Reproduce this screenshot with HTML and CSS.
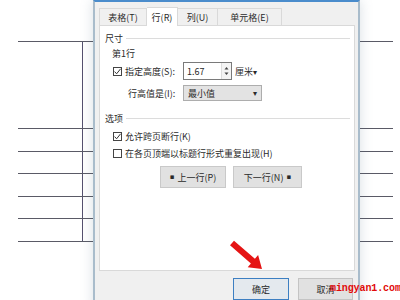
FILE: index.html
```html
<!DOCTYPE html>
<html>
<head>
    <meta charset="utf-8">
    <title>表格属性</title>
    <link rel="stylesheet" href="styles.css">
</head>
<body>
    <div class="doc">
        <div class="doc_table">
            <div class="doc_row r1"><div class="doc_cell"></div></div>
            <div class="doc_row r2"><div class="doc_cell"></div></div>
            <div class="doc_row r3"><div class="doc_cell"></div></div>
            <div class="doc_row r2"><div class="doc_cell"></div></div>
            <div class="doc_row r3"><div class="doc_cell"></div></div>
            <div class="doc_row r2"><div class="doc_cell"></div></div>
        </div>
    </div>

    <div class="dialog">
        <div class="tabs">
            <div class="tab t1">表格(T)</div>
            <div class="tab t2 active">行(R)</div>
            <div class="tab t3">列(U)</div>
            <div class="tab t4">单元格(E)</div>
        </div>

        <div class="panel">
            <div class="legend"><span>尺寸</span><i class="legend_line"></i></div>
            <div class="row_title">第1行</div>

            <div class="check_row first">
                <span class="check on">
                    <svg width="9" height="9" viewBox="0 0 9 9"><polyline points="1.6,4.6 3.6,6.8 7.6,1.8" fill="none" stroke="#333" stroke-width="1"/></svg>
                </span>
                <span class="field_label">指定高度(S):</span>
                <div class="spin">
                    <span class="spin_value">1.67</span>
                    <span class="spin_arrows">
                        <svg width="7" height="14" viewBox="0 0 7 14"><polygon points="1.5,5.5 5.5,5.5 3.5,3" fill="#444"/><polygon points="1.5,8.5 5.5,8.5 3.5,11" fill="#444"/></svg>
                    </span>
                </div>
                <span class="unit">厘米<b class="caret">▾</b></span>
            </div>

            <div class="select_row">
                <span class="field_label wide">行高值是(I):</span>
                <div class="select">
                    <span>最小值</span>
                    <b class="caret">▾</b>
                </div>
            </div>

            <div class="legend options"><span>选项</span><i class="legend_line"></i></div>

            <div class="check_row opt1">
                <span class="check on">
                    <svg width="9" height="9" viewBox="0 0 9 9"><polyline points="1.6,4.6 3.6,6.8 7.6,1.8" fill="none" stroke="#333" stroke-width="1"/></svg>
                </span>
                <span>允许跨页断行(K)</span>
            </div>
            <div class="check_row opt2">
                <span class="check"></span>
                <span>在各页顶端以标题行形式重复出现(H)</span>
            </div>

            <div class="nav_buttons">
                <div class="btn prev"><b class="dot">▪</b> 上一行(P)</div>
                <div class="btn next">下一行(N) <b class="dot">▪</b></div>
            </div>
        </div>

        <div class="footer">
            <div class="btn ok">确定</div>
            <div class="btn cancel">取消</div>
        </div>
    </div>

    <!-- red arrow drawn on the screenshot -->
    <svg class="arrow" width="45" height="38" viewBox="0 0 45 38">
        <polygon points="9,4.7 29.9,22.8 33.1,19.1 37,33 22.7,31.2 25.9,27.4 5,9.3" fill="#e51414"/>
    </svg>

    <div class="watermark">mingyan1.com</div>
</body>
</html>
```

FILE: styles.css
```css
body {
    margin:0;
    width:400px;
    height:300px;
    overflow:hidden;
    position:relative;
    background:#fff;
    font-family:"Noto Sans CJK SC", "Noto Sans", sans-serif;
    font-size:9px;
    color:#2a2a2a;
}

/* document table behind the dialog */
.doc {
    padding-top:41px;
}
.doc_table {
    margin-left:18px;
    width:375px;
    border-bottom:1px solid #5a5a66;
}
.doc_row {
    border-top:1px solid #5a5a66;
    box-sizing:border-box;
}
.doc_row.r1 { height:87px; }
.doc_row.r2 { height:23px; }
.doc_row.r3 { height:22px; }
.doc_cell {
    width:64px;
    height:100%;
    border-right:1px solid #55506e;
}

/* dialog */
.dialog {
    position:absolute;
    left:93px;
    top:0;
    width:267px;
    height:310px;
    background:#f0f0f0;
    border-left:2px solid #a9bccb;
    border-right:2px solid #a9bccb;
    border-top:2px solid #4a8ccc;
    box-shadow:0 0 12px rgba(80,110,130,0.22);
    padding:6px 7px 0 4px;
    box-sizing:border-box;
}

.tabs {
    display:flex;
    align-items:flex-end;
    height:17px;
}
.tab {
    height:17px;
    line-height:17px;
    text-align:center;
    box-sizing:border-box;
    border:1px solid #d9d9d9;
    border-bottom:none;
    background:#f0f0f0;
}
.tab.t1 { width:48px; }
.tab.t2 { width:31px; }
.tab.t3 { width:40px; border-left:none; }
.tab.t4 { width:64px; border-left:none; }
.tab.active {
    height:19px;
    line-height:19px;
    background:#fff;
    margin-bottom:-1px;
    position:relative;
    z-index:1;
    border-left:none;
}

.panel {
    width:256px;
    height:246px;
    box-sizing:border-box;
    background:#fff;
    border:1px solid #d9d9d9;
    padding:0 5px;
}

.legend {
    display:flex;
    align-items:center;
    gap:3px;
    height:12px;
    margin-top:6px;
}
.legend_line {
    flex:1;
    border-top:1px solid #dcdcdc;
    margin-right:-1px;
}
.legend.options {
    margin-top:11px;
}

.row_title {
    height:12px;
    line-height:12px;
    margin-top:4px;
    padding-left:7px;
}

.check_row {
    display:flex;
    align-items:center;
    padding-left:8px;
}
.check_row.first { height:18px; margin-top:2px; }
.check_row.opt1 { height:14px; margin-top:5px; }
.check_row.opt2 { height:14px; margin-top:3px; }

.check {
    width:9px;
    height:9px;
    box-sizing:border-box;
    border:1px solid #444;
    background:#fff;
    margin-right:3px;
    display:flex;
}
.check svg {
    margin:-1px;
}

.field_label {
    width:55px;
}
.field_label.wide {
    width:52px;
}

.spin {
    margin-left:3px;
    width:49px;
    height:18px;
    box-sizing:border-box;
    border:1px solid #7a7a7a;
    display:flex;
    align-items:center;
    justify-content:space-between;
    padding-left:3px;
}
.spin_arrows {
    display:flex;
    width:9px;
    height:16px;
    align-items:center;
    justify-content:center;
    background:#f4f4f4;
    border-left:1px solid #ddd;
}
.unit {
    margin-left:3px;
}
.caret {
    font-weight:normal;
    font-size:8px;
    font-family:"DejaVu Sans", sans-serif;
}

.select_row {
    display:flex;
    align-items:center;
    height:16px;
    margin-top:5px;
    padding-left:23px;
}
.select {
    margin-left:3px;
    width:79px;
    height:16px;
    box-sizing:border-box;
    background:#e3e3e3;
    border:1px solid #adadad;
    display:flex;
    align-items:center;
    justify-content:space-between;
    padding:0 4px 0 4px;
}

.nav_buttons {
    display:flex;
    gap:7px;
    margin-top:6px;
    padding-left:55px;
}
.btn {
    height:22px;
    box-sizing:border-box;
    background:#e1e1e1;
    border:1px solid #c9c9c9;
    display:flex;
    align-items:center;
    justify-content:center;
    gap:3px;
}
.btn.prev { width:66px; }
.btn.next { width:69px; }
.dot {
    font-weight:normal;
    font-size:7px;
    font-family:"DejaVu Sans", sans-serif;
}

.footer {
    display:flex;
    justify-content:flex-end;
    gap:9px;
    margin-top:7px;
    margin-right:-2px;
}
.btn.ok {
    width:56px;
    border:1px solid #3d7fc2;
    background:#e4e9ee;
}
.btn.cancel {
    width:55px;
    border-color:#c4c4c4;
}

.arrow {
    position:absolute;
    left:225px;
    top:236px;
}

.watermark {
    position:absolute;
    left:330px;
    top:283px;
    font-family:"Liberation Mono", monospace;
    font-size:10px;
    font-weight:bold;
    color:#e10a0a;
    letter-spacing:-0.1px;
}
```
